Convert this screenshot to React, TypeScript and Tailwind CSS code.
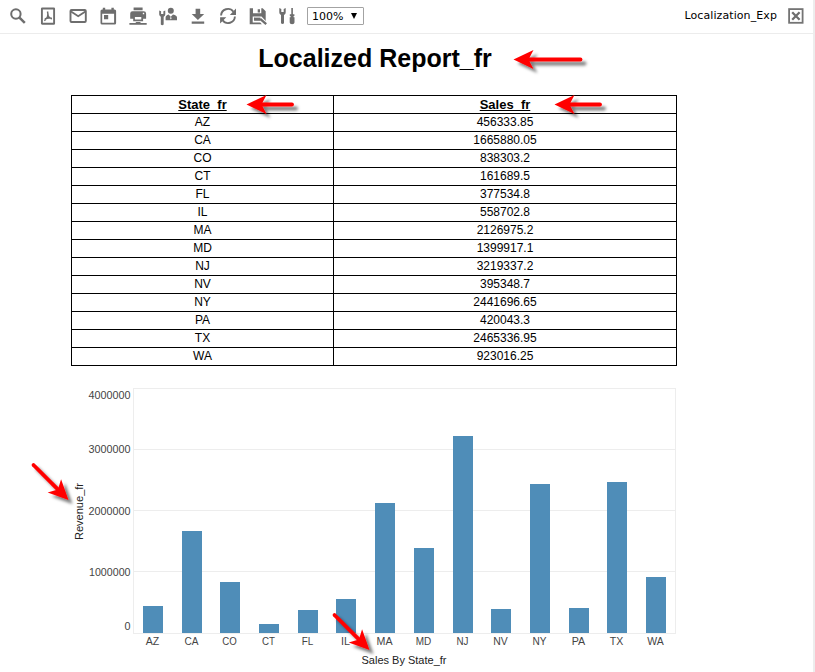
import type { ReactNode } from "react";

const rows: [string, string][] = [
  ["AZ", "456333.85"], ["CA", "1665880.05"], ["CO", "838303.2"], ["CT", "161689.5"],
  ["FL", "377534.8"], ["IL", "558702.8"], ["MA", "2126975.2"], ["MD", "1399917.1"],
  ["NJ", "3219337.2"], ["NV", "395348.7"], ["NY", "2441696.65"], ["PA", "420043.3"],
  ["TX", "2465336.95"], ["WA", "923016.25"],
];

// state, left edge, top edge inside the chart, label width
const bars: [string, number, number, number][] = [
  ["AZ", 143, 226, 13.5], ["CA", 182, 151, 14], ["CO", 220, 202, 14.5], ["CT", 259, 244, 13],
  ["FL", 298, 230, 11.5], ["IL", 336, 219, 9], ["MA", 375, 123, 16], ["MD", 414, 168, 15.5],
  ["NJ", 453, 56, 12], ["NV", 491, 229, 14.5], ["NY", 530, 104, 14], ["PA", 569, 228, 13.5],
  ["TX", 607, 102, 13.5], ["WA", 646, 197, 16.5],
];

const yLabels: [string, number, number][] = [
  ["4000000", 19, 42], ["3000000", 73, 42], ["2000000", 135, 42], ["1000000", 196, 41.5], ["0", 250, 6],
];

function Icon({ label, children }: { label: string; children: ReactNode }) {
  return (
    <svg aria-label={label} viewBox="0 0 20 20" className="h-5 w-5 shrink-0 fill-[#6e6e6e] stroke-none">
      {children}
    </svg>
  );
}

const wrench = "M0 0v4.200C0 5.600 .9 6.400 1.700 6.800v8.400q1.500 1.400 3 0V6.800C5.600 6.400 6.400 5.600 6.400 4.200V0L4.400 .8v3H2v-3z";

function Toolbar() {
  return (
    <header className="flex h-[34px] items-center border-b border-[#ececec] pb-px pr-[9px] pl-2">
      <div className="flex items-center gap-[10px]">
        <Icon label="Search">
          <circle cx="7.900" cy="8" r="4.700" fill="none" stroke="#6e6e6e" strokeWidth="2" />
          <path d="M11.200 11.300l5.600 5.500" stroke="#6e6e6e" strokeWidth="2.500" />
        </Icon>
        <Icon label="PDF">
          <rect x="3.900" y="2.500" width="12.200" height="15.200" rx=".3" fill="none" stroke="#6e6e6e" strokeWidth="1.900" />
          <path d="M9.500 5.500q1 3.500 0 5.200-1.300 2.900-3.300 3.800M9.700 9q.9 3.200 4.300 3.700M6.800 12.900q3-1.300 7-.6" fill="none" stroke="#6e6e6e" strokeWidth="1.500" />
        </Icon>
        <Icon label="Mail">
          <rect x="2.500" y="4" width="15.300" height="12" rx="1" fill="none" stroke="#6e6e6e" strokeWidth="1.900" />
          <path d="M3 5.500l7.200 4.700 7.200-4.700" fill="none" stroke="#6e6e6e" strokeWidth="1.900" />
        </Icon>
        <Icon label="Schedule">
          <path fillRule="evenodd" d="M4.800 1.700h2.400v1.700h6.200V1.700h2.400v1.700h.8q1.500 0 1.500 1.500v12q0 1.600-1.500 1.600h-12.500q-1.600 0-1.600-1.600v-12q0-1.500 1.600-1.500h.7zM4.200 7.700v9h11.900v-9zM6 9h4.200v4.200H6z" />
        </Icon>
        <Icon label="Print">
          <path fillRule="evenodd" d="M5.600 1.500h9v2.700h-9zM4.500 5.300h11.200q2.400 0 2.400 2.300v5.200h-3v2.500H5.200v-2.500H2.200V7.600q0-2.300 2.300-2.300zM6.900 11v2.500h6.400V11zM14.800 6.800v1.400h1.400V6.800z" />
          <path d="M1.400 17h5.900l1-1.100h3.700l1 1.100h5.700v1.700H1.400z" />
        </Icon>
        <Icon label="User settings">
          <path transform="translate(1.200 4.500) scale(.95 .92)" d={wrench} />
          <circle cx="12.800" cy="4.700" r="3" />
          <path d="M7.600 14.200v-2.600q0-2.400 3-3.200l2.200 2.400 2.200-2.400q4 .8 4 3.200v2.600z" />
          <path d="M12.800 10l.9 2.500-.9 1-.9-1z" fill="#dedede" />
        </Icon>
        <Icon label="Download">
          <path d="M7.600 2.700h4.600v5.200h4L9.900 14 3.700 7.900h3.900zM3.700 15.500h12.500v2.200H3.700z" />
        </Icon>
        <Icon label="Refresh">
          <path d="M3.100 9.500A6.800 6.800 0 0 1 15.400 5.800M16.900 10.500A6.800 6.800 0 0 1 4.600 14.200" fill="none" stroke="#6e6e6e" strokeWidth="1.900" />
          <path d="M18 2.600v6.300h-6.200zM2.100 17.500v-6.300h6.200z" />
        </Icon>
        <Icon label="Save">
          <path fillRule="evenodd" d="M1.700 2.300h13l3 3V15L13.500 10.400H4.700v6h7.500l1.700 1.800H1.700zM5 2.300v5h8.300v-5zM9.700 3.300h2.300v3.200H9.700z" />
          <path d="M6 11.600h6.400v3.200H6z" />
          <path d="M12.200 12.800l6 5.300" stroke="#6e6e6e" strokeWidth="2.300" />
        </Icon>
        <Icon label="Tools">
          <path transform="translate(1.300 2.100)" d={wrench} />
          <path d="M13.300 2h1.600v6.200h1.500v1.700h-.8v1.300h.9v5.200q0 1.800-2.400 1.800t-2.400-1.800v-5.200h.9V9.900h-.8V8.200h1.500z" />
        </Icon>
      </div>
      <button className="ml-[9px] flex h-[18px] w-[57px] items-center justify-between rounded-[1px] border border-[#a3a3a3] bg-white pr-[6px] pb-[1px] pl-[4px] font-['DejaVu_Sans',sans-serif] text-[11px] leading-none text-black">
        <span className="pt-px">100%</span>
        <svg viewBox="0 0 6 6" className="h-[6px] w-[6px]"><path d="M0 0h6L3 6z" /></svg>
      </button>
      <span className="ml-auto pt-px font-['DejaVu_Sans',sans-serif] text-[11px] tracking-[0.09px] text-black">Localization_Exp</span>
      <svg aria-label="Close" viewBox="0 0 16 16" className="ml-[11px] h-4 w-4 shrink-0">
        <rect x="1.100" y="1.100" width="13.500" height="13.700" fill="none" stroke="#747474" strokeWidth="1.800" />
        <path d="M4.200 4.300l7.400 7.400M11.600 4.300l-7.400 7.400" stroke="#6e6e6e" strokeWidth="2.300" />
      </svg>
    </header>
  );
}

// Arrow whose tip sits at (x, y); the shaft runs to the right before rotation.
function Arrow({ x, y, length, angle = 0 }: { x: number; y: number; length: number; angle?: number }) {
  return (
    <g filter="url(#arrow-shadow)">
      <g transform={`translate(${x} ${y}) rotate(${angle})`}>
        <path d="M0 0L20-9.500 15 0 20 9.500z" fill="#f00" />
        <path d={`M14 0H${length}`} stroke="#f00" strokeWidth="3.800" strokeLinecap="round" />
      </g>
    </g>
  );
}

function Chart() {
  return (
    <svg viewBox="0 0 813 292" className="mt-[14px] block h-[292px] w-[813px] shrink-0 font-['Liberation_Sans',sans-serif] text-[11px]">
      <path d="M133 8.500h543M133 69.500h543M133 130.500h543M133 191.500h543M133 253.500h543M133.500 8v246M675.500 8v246" stroke="#ededed" fill="none" />
      {yLabels.map(([text, y, w]) => (
        <text key={text} x={130.500 - w} y={y} fontSize="10.500" textLength={w} lengthAdjust="spacingAndGlyphs" fill="#444">{text}</text>
      ))}
      {bars.map(([name, x, top, w]) => (
        <g key={name}>
          <rect x={x} y={top} width="20" height={253 - top} fill="#4f8db8" />
          <text x={x + 9.500 - w / 2} y="265" fontSize="10" textLength={w} lengthAdjust="spacingAndGlyphs" fill="#444">{name}</text>
        </g>
      ))}
      <text transform="translate(83 160) rotate(-90)" textLength="57" lengthAdjust="spacingAndGlyphs" fill="#222">Revenue_fr</text>
      <text x="361.500" y="284" textLength="85" lengthAdjust="spacingAndGlyphs" fill="#222">Sales By State_fr</text>
    </svg>
  );
}

export default function App() {
  return (
    <div className="relative flex h-[672px] w-[815px] overflow-hidden bg-white">
      <div className="flex w-[813px] shrink-0 flex-col">
        <Toolbar />
        <h1 className="mt-2 ml-[71px] w-[608px] text-center font-['Liberation_Sans',sans-serif] text-[25px] leading-8 font-bold text-black">Localized Report_fr</h1>
        <table className="mt-[21px] ml-[71px] w-[606px] table-fixed border-collapse text-center font-['Liberation_Sans',sans-serif] text-[12px] leading-[17px] text-black">
          <colgroup><col className="w-[262px]" /><col /></colgroup>
          <thead>
            <tr className="h-[18px]">
              <th className="border border-black p-0 text-[13px] underline">State_fr</th>
              <th className="border border-black p-0 text-[13px] underline">Sales_fr</th>
            </tr>
          </thead>
          <tbody>
            {rows.map(([state, sales]) => (
              <tr key={state} className="h-[18px]">
                <td className="border border-black p-0">{state}</td>
                <td className="border border-black p-0">{sales}</td>
              </tr>
            ))}
          </tbody>
        </table>
        <Chart />
      </div>
      <div className="w-[2px] bg-[#ededed]" />
      <svg viewBox="0 0 815 672" className="pointer-events-none absolute inset-0 h-[672px] w-[815px]">
        <defs>
          <filter id="arrow-shadow" filterUnits="userSpaceOnUse" x="0" y="0" width="815" height="672">
            <feDropShadow dx="4" dy="4" stdDeviation="1.800" floodColor="#000" floodOpacity=".5" />
          </filter>
        </defs>
        <Arrow x={513.500} y={59.500} length={67} />
        <Arrow x={246.500} y={104.500} length={45.500} />
        <Arrow x={554.500} y={104.500} length={45.500} />
        <Arrow x={68.500} y={500} length={49.500} angle={225} />
        <Arrow x={369.500} y={650} length={49.500} angle={225} />
      </svg>
    </div>
  );
}
